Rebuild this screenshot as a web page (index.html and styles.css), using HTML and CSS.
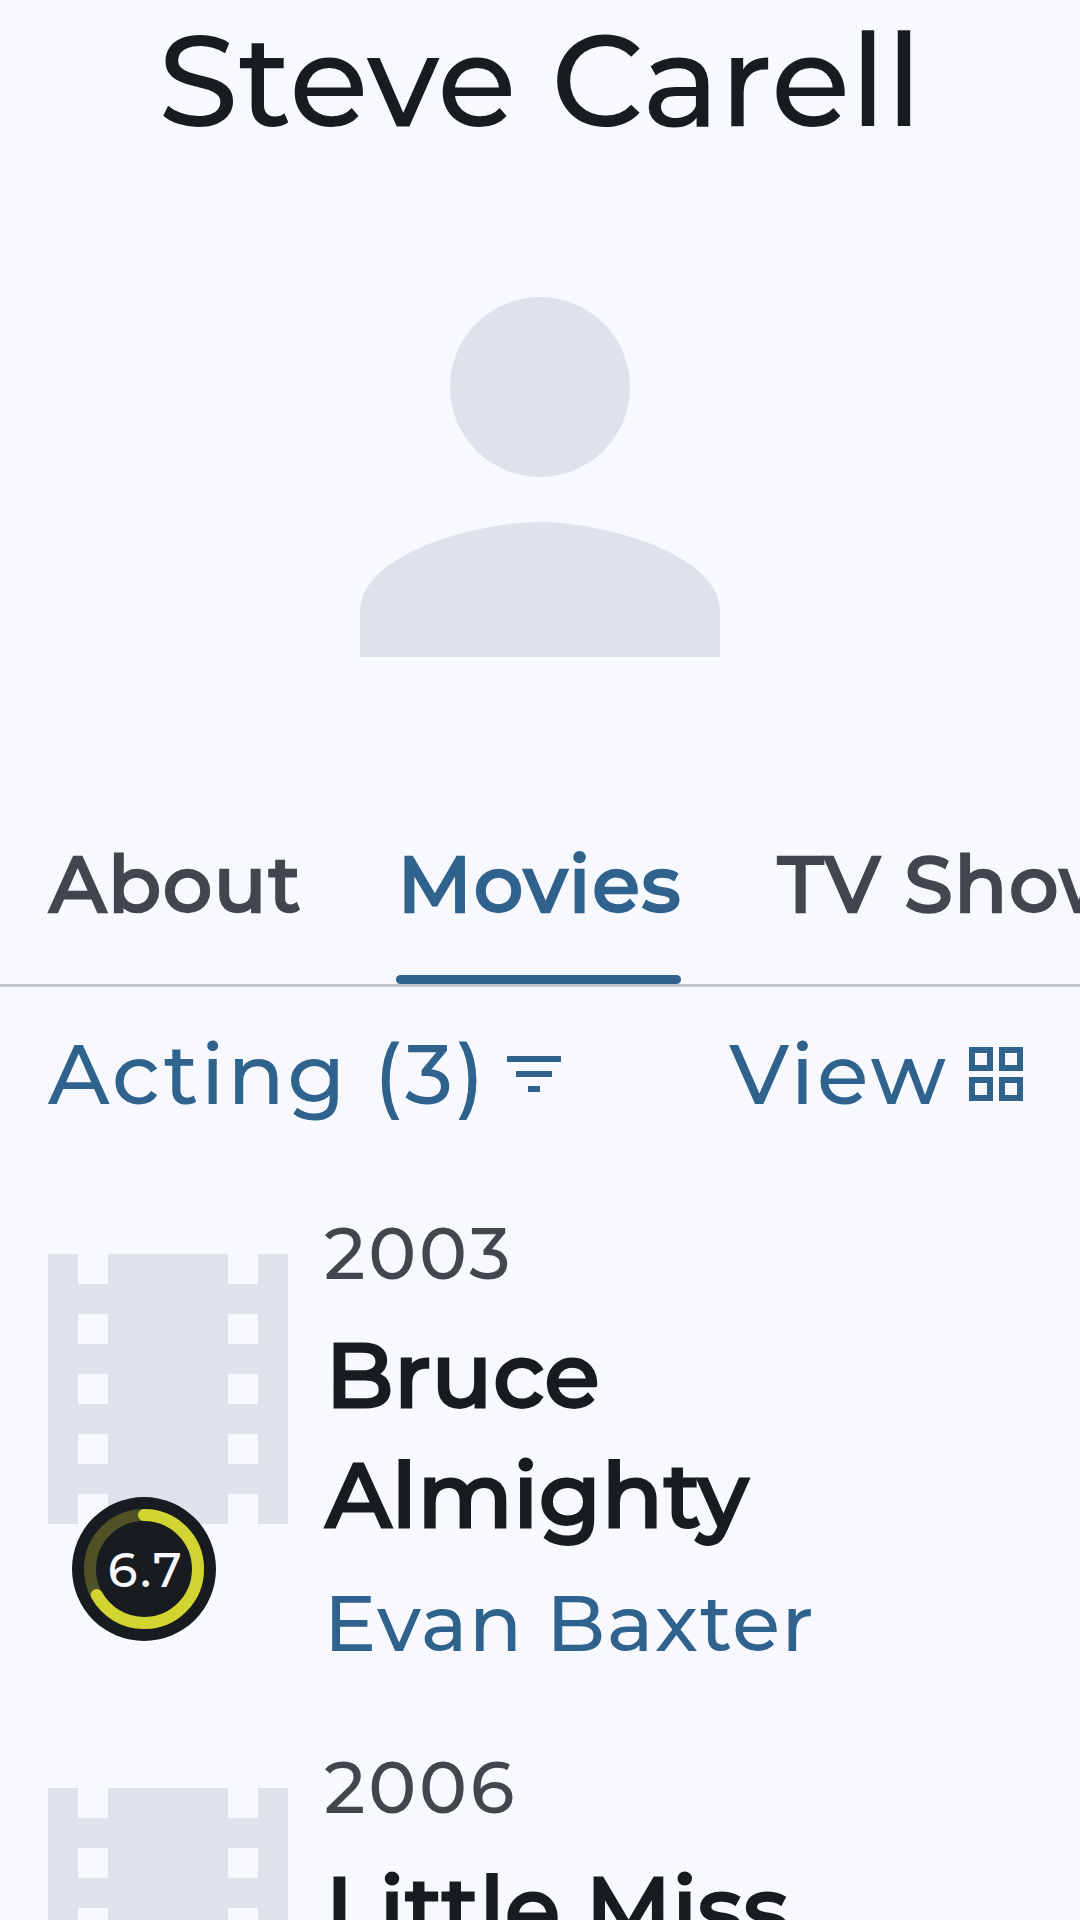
FILE: index.html
```html
<!DOCTYPE html>
<html lang="en">
<head>
<meta charset="utf-8">
<title>Steve Carell</title>
<link rel="stylesheet" href="styles.css">
</head>
<body>
<main class="screen">
  <h1 class="name">Steve Carell</h1>
  <svg class="portrait" viewBox="0 0 24 24" aria-hidden="true"><circle cx="12" cy="8" r="4"/><path d="M12 14c-2.67 0-8 1.34-8 4v2h16v-2c0-2.66-5.33-4-8-4z"/></svg>

  <nav class="tabs">
    <a class="tab">About</a>
    <a class="tab active">Movies</a>
    <a class="tab">TV Shows</a>
  </nav>

  <div class="controls">
    <button class="control">Acting (3)
      <svg class="icon" viewBox="0 0 24 24" aria-hidden="true"><path d="M3 6h18v2H3zM6 11h12v2H6zM10 16h4v2h-4z"/></svg>
    </button>
    <button class="control">View
      <svg class="icon" viewBox="0 0 24 24" aria-hidden="true"><path fill-rule="evenodd" d="M3 3h8v8H3zM5 5v4h4V5zM13 3h8v8h-8zM15 5v4h4V5zM3 13h8v8H3zM5 15v4h4v-4zM13 13h8v8h-8zM15 15v4h4v-4z"/></svg>
    </button>
  </div>

  <section class="credits">
    <article class="credit">
      <div class="poster">
        <svg class="film" viewBox="0 0 8 9" aria-hidden="true"><path fill-rule="evenodd" d="M0 0h1v1h1V0h4v1h1V0h1v9H7V8H6v1H2V8H1v1H0zM1 2v1h1V2zM1 4v1h1V4zM1 6v1h1V6zM6 2v1h1V2zM6 4v1h1V4zM6 6v1h1V6z"/></svg>
        <div class="rating">
          <svg class="ring" viewBox="0 0 144 144" aria-hidden="true"><circle class="ring-track" cx="72" cy="72" r="54"/><circle class="ring-value" cx="72" cy="72" r="54" pathLength="100" stroke-dasharray="67 100" transform="rotate(-90 72 72)"/></svg>
          <span class="score">6.7</span>
        </div>
      </div>
      <div class="details">
        <p class="year">2003</p>
        <h2 class="title">Bruce Almighty</h2>
        <p class="character">Evan Baxter</p>
      </div>
    </article>
    <article class="credit">
      <div class="poster">
        <svg class="film" viewBox="0 0 8 9" aria-hidden="true"><path fill-rule="evenodd" d="M0 0h1v1h1V0h4v1h1V0h1v9H7V8H6v1H2V8H1v1H0zM1 2v1h1V2zM1 4v1h1V4zM1 6v1h1V6zM6 2v1h1V2zM6 4v1h1V4zM6 6v1h1V6z"/></svg>
      </div>
      <div class="details">
        <p class="year">2006</p>
        <h2 class="title">Little Miss</h2>
      </div>
    </article>
  </section>
</main>
</body>
</html>
```
FILE: styles.css
```css
* {
  box-sizing: border-box;
  margin: 0;
}

body {
  background: #f8f9ff;
  color: #181c20;
  font-family: Montserrat, "Liberation Sans", sans-serif;
  font-weight: 500;
}

.screen {
  display: flex;
  flex-direction: column;
  width: 1080px;
  height: 1920px;
  overflow: hidden;
}

.screen > * {
  flex-shrink: 0;
}

.name {
  font-size: 129.4px;
  font-weight: 500;
  line-height: 160px;
  letter-spacing: -0.1px;
  text-align: center;
}

.portrait {
  align-self: center;
  width: 540px;
  height: 540px;
  margin-top: 47px;
  fill: #dee2eb;
}

.tabs {
  display: flex;
  gap: 94.3px;
  padding: 88px 48px 0;
  border-bottom: 3px solid #c2c7cf;
  color: #42474e;
  font-size: 78px;
  line-height: 98px;
  letter-spacing: 1.6px;
  text-indent: 1.2px;
  white-space: nowrap;
  -webkit-text-stroke: 2.4px currentColor;
}

.tab {
  padding-bottom: 51px;
}

.active {
  color: #2f628c;
}

.active::after {
  content: "";
  display: block;
  height: 9px;
  margin: 42px 1px -51px 0;
  border-radius: 4.5px;
  background: #2f628c;
}

.controls {
  display: flex;
  justify-content: space-between;
  align-items: center;
  height: 174px;
  padding: 0 48px;
}

.control {
  display: flex;
  align-items: center;
  gap: 11px;
  padding: 0;
  border: 0;
  background: none;
  color: #2f628c;
  font: 500 84px/120px Montserrat, "Liberation Sans", sans-serif;
  letter-spacing: 2.9px;
}

.icon {
  width: 72px;
  height: 72px;
  fill: currentColor;
}

.credit {
  display: flex;
  gap: 36px;
  height: 534px;
  padding: 44px 48px 0;
}

.poster {
  position: relative;
  display: flex;
  flex: none;
  align-items: center;
  width: 240px;
  height: 360px;
  margin-top: 4px;
}

.film {
  width: 240px;
  height: 270px;
  fill: #dee2eb;
}

.rating {
  position: absolute;
  left: 24px;
  bottom: -72px;
  display: grid;
  place-items: center;
  width: 144px;
  height: 144px;
  border-radius: 50%;
  background: #181c20;
  color: #f8f9ff;
}

.ring,
.score {
  grid-area: 1 / 1;
}

.ring {
  width: 144px;
  height: 144px;
  fill: none;
  stroke: #d2d531;
  stroke-width: 12;
}

.ring-track {
  stroke: #4f5225;
}

.ring-value {
  stroke-linecap: round;
}

.score {
  padding: 2px 0 0 4px;
  font-size: 48px;
  line-height: 60px;
  letter-spacing: 2.4px;
}

.details {
  width: 480px;
}

.year {
  margin-bottom: 14px;
  color: #42474e;
  font-size: 72px;
  line-height: 96px;
  letter-spacing: 2.9px;
}

.title {
  padding-left: 1.4px;
  font-size: 90px;
  font-weight: 500;
  line-height: 120px;
  letter-spacing: 0.6px;
  -webkit-text-stroke: 2.8px currentColor;
}

.character {
  margin-top: 17px;
  color: #2f628c;
  font-size: 78px;
  line-height: 102px;
  letter-spacing: 1.6px;
  white-space: nowrap;
}
```
